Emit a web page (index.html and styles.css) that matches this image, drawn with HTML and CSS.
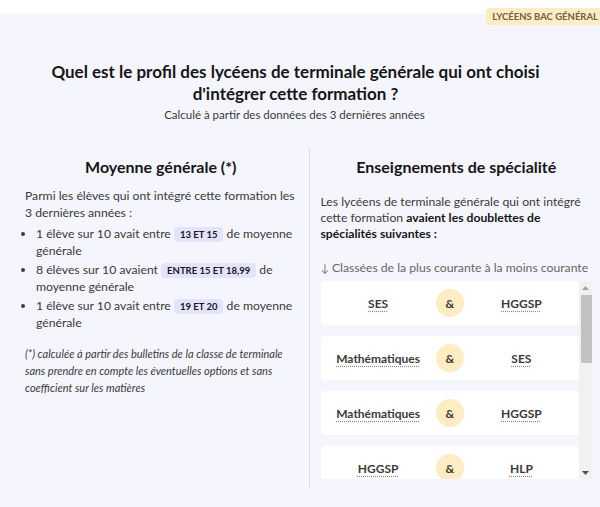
FILE: index.html
```html
<!DOCTYPE html>
<html lang="fr">
<head>
<meta charset="utf-8">
<title>Profil des lycéens</title>
<link rel="stylesheet" href="styles.css">
</head>
<body>
<div class="page">
  <div class="topband"></div>
  <span class="badge">Lycéens bac général</span>
  <main class="main">
    <h1 class="title">Quel est le profil des lycéens de terminale générale qui ont choisi d'intégrer cette formation ?</h1>
    <p class="subtitle">Calculé à partir des données des 3 dernières années</p>
    <div class="columns">
      <section class="col col-left">
        <h2 class="col-title">Moyenne générale (*)</h2>
        <p class="intro">Parmi les élèves qui ont intégré cette formation les 3 dernières années :</p>
        <ul class="stats">
          <li>1 élève sur 10 avait entre <span class="chip">13 et 15</span> de moyenne générale</li>
          <li>8 élèves sur 10 avaient <span class="chip">entre 15 et 18,99</span> de moyenne générale</li>
          <li>1 élève sur 10 avait entre <span class="chip">19 et 20</span> de moyenne générale</li>
        </ul>
        <p class="note">(*) calculée à partir des bulletins de la classe de terminale sans prendre en compte les éventuelles options et sans coefficient sur les matières</p>
      </section>
      <section class="col col-right">
        <h2 class="col-title">Enseignements de spécialité</h2>
        <p class="intro intro-right">Les lycéens de terminale générale qui ont intégré cette formation <strong>avaient les doublettes de spécialités suivantes :</strong></p>
        <p class="order"><span class="arrow">↓</span> Classées de la plus courante à la moins courante</p>
        <div class="scroller">
          <div class="pairs">
            <div class="pair"><span class="subj">SES</span><span class="amp">&amp;</span><span class="subj">HGGSP</span></div>
            <div class="pair"><span class="subj">Mathématiques</span><span class="amp">&amp;</span><span class="subj">SES</span></div>
            <div class="pair"><span class="subj">Mathématiques</span><span class="amp">&amp;</span><span class="subj">HGGSP</span></div>
            <div class="pair"><span class="subj">HGGSP</span><span class="amp">&amp;</span><span class="subj">HLP</span></div>
          </div>
          <div class="scrollbar" aria-hidden="true">
            <span class="sb-btn">
              <svg width="7" height="4" viewBox="0 0 7 4"><polygon points="0,4 3.5,0 7,4" fill="#a3a3a3"/></svg>
            </span>
            <span class="sb-track"><span class="sb-thumb"></span></span>
            <span class="sb-btn">
              <svg width="7" height="4" viewBox="0 0 7 4"><polygon points="0,0 7,0 3.5,4" fill="#505050"/></svg>
            </span>
          </div>
        </div>
      </section>
    </div>
  </main>
</div>
</body>
</html>
```
FILE: styles.css
```css
html, body {
  margin: 0;
  padding: 0;
  overflow: hidden;
}
body {
  background: #f5f5fe;
  font-family: Lato, "Noto Sans", sans-serif;
  color: #3a3a3a;
}
.page {
  position: relative;
  min-height: 507px;
  overflow: hidden;
}
.topband {
  height: 14px;
  background: #ffffff;
}
.badge {
  position: absolute;
  top: 8px;
  right: -4px;
  height: 17px;
  line-height: 17px;
  padding: 0 6px;
  background: #feecc2;
  color: #716043;
  font-size: 9.5px;
  font-weight: 700;
  text-transform: uppercase;
  border-radius: 4px;
}
.main {
  padding: 47px 8px 0 25px;
}
.title {
  margin: 0 auto;
  width: 520px;
  text-align: center;
  font-size: 17px;
  line-height: 22px;
  font-weight: 700;
  color: #161616;
  position: relative;
  left: -13px;
}
.subtitle {
  margin: 3px 0 0;
  text-align: center;
  font-size: 11.5px;
  line-height: 14px;
  color: #3a3a3a;
  position: relative;
  left: -14px;
}
.columns {
  margin-top: 26px;
  display: grid;
  grid-template-columns: 1fr 1fr;
}
.col {
  padding-top: 8px;
  padding-bottom: 9px;
}
.col-left {
  padding-right: 12px;
}
.col-right {
  border-left: 1px solid #dedee6;
  padding-left: 11px;
}
.col-title {
  margin: 0;
  text-align: center;
  font-size: 16px;
  line-height: 22px;
  font-weight: 700;
  color: #161616;
}
.intro {
  margin: 9px 0 0;
  font-size: 12.2px;
  line-height: 17px;
}
.intro-right {
  margin-top: 16px;
  line-height: 16px;
}
.intro strong {
  color: #161616;
  font-weight: 700;
}
.stats {
  margin: 4px 0 0;
  padding-left: 11px;
  font-size: 12.2px;
  line-height: 17px;
}
.stats li {
  margin-bottom: 2px;
}
.chip {
  display: inline-block;
  padding: 0 6px;
  height: 15px;
  line-height: 15px;
  border-radius: 4px;
  background: #e3e3fd;
  color: #161616;
  font-size: 9.5px;
  font-weight: 700;
  text-transform: uppercase;
}
.note {
  margin: 14px 0 0;
  font-size: 11px;
  line-height: 17px;
  font-style: italic;
}
.order {
  margin: 18px 0 0;
  font-size: 12.2px;
  line-height: 16px;
  color: #666666;
}
.arrow {
  font-size: 11px;
  color: #777777;
}
.scroller {
  margin-top: 5px;
  height: 198px;
  display: flex;
}
.pairs {
  flex: 1;
  overflow: hidden;
  display: flex;
  flex-direction: column;
  gap: 11px;
}
.pair {
  flex: 0 0 44px;
  background: #ffffff;
  border-radius: 4px;
  display: grid;
  grid-template-columns: 1fr 28px 1fr;
  align-items: center;
  justify-items: center;
}
.subj {
  font-size: 12px;
  font-weight: 700;
  color: #3a3a3a;
  text-decoration: underline dotted #8a8a8a;
  text-underline-offset: 3px;
}
.amp {
  width: 28px;
  height: 28px;
  border-radius: 50%;
  background: #feecc2;
  display: flex;
  align-items: center;
  justify-content: center;
  font-size: 12px;
  font-weight: 700;
  color: #3a3a3a;
}
.scrollbar {
  width: 13px;
  background: #f1f1f1;
  display: flex;
  flex-direction: column;
}
.sb-btn {
  height: 13px;
  display: flex;
  align-items: center;
  justify-content: center;
}
.sb-track {
  flex: 1;
  display: flex;
  flex-direction: column;
  padding: 1px 0 0 2px;
}
.sb-thumb {
  height: 68px;
  background: #c1c1c1;
}
```
